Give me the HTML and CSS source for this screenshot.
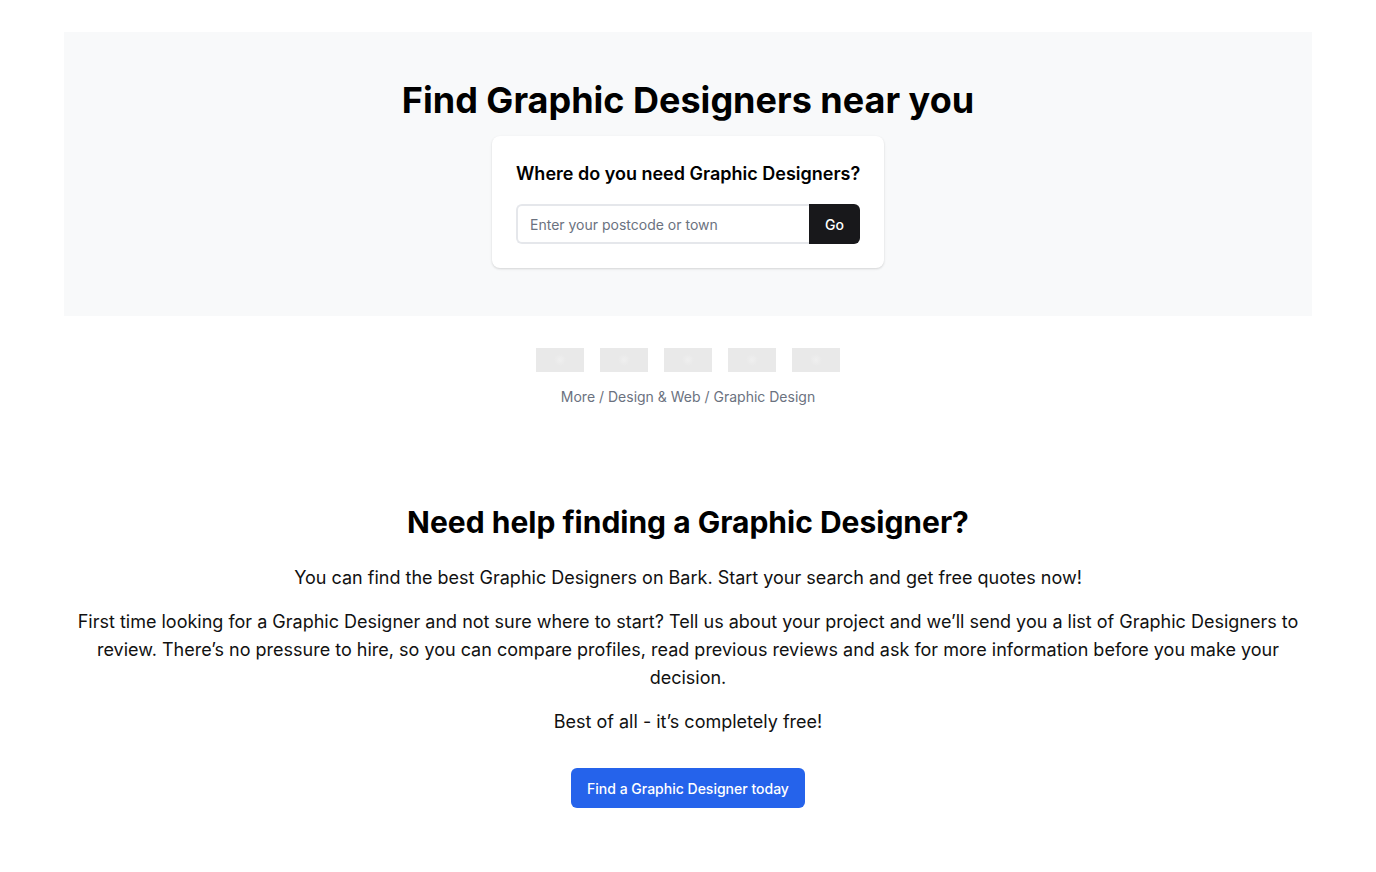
FILE: index.html
```html
<!DOCTYPE html>
<html lang="en">
<head>
<meta charset="utf-8">
<title>Find Graphic Designers near you</title>
<link rel="stylesheet" href="styles.css">
</head>
<body>
<main class="page">
  <section class="hero">
    <h1 class="hero-title">Find Graphic Designers near you</h1>
    <div class="card">
      <h2 class="card-title">Where do you need Graphic Designers?</h2>
      <form class="search">
        <input class="search-input" type="text" placeholder="Enter your postcode or town">
        <button class="search-btn" type="button">Go</button>
      </form>
    </div>
  </section>
  <div class="logos">
    <span class="logo"></span>
    <span class="logo"></span>
    <span class="logo"></span>
    <span class="logo"></span>
    <span class="logo"></span>
  </div>
  <nav class="crumbs">More / Design &amp; Web / Graphic Design</nav>
  <section class="help">
    <h2 class="help-title">Need help finding a Graphic Designer?</h2>
    <p class="help-text">You can find the best Graphic Designers on Bark. Start your search and get free quotes now!</p>
    <p class="help-text">First time looking for a Graphic Designer and not sure where to start? Tell us about your project and we’ll send you a list of Graphic Designers to review. There’s no pressure to hire, so you can compare profiles, read previous reviews and ask for more information before you make your decision.</p>
    <p class="help-text">Best of all - it’s completely free!</p>
    <button class="cta" type="button">Find a Graphic Designer today</button>
  </section>
</main>
</body>
</html>
```
FILE: styles.css
```css
* { box-sizing: border-box; }
html, body { margin: 0; padding: 0; background: #fff; }
body {
  font-family: Inter, "Noto Sans", sans-serif;
  color: #111;
}
.page {
  padding: 32px 64px 0;
  display: flex;
  flex-direction: column;
  align-items: stretch;
}
.hero {
  background: #f8f9fa;
  padding: 48px 0;
  display: flex;
  flex-direction: column;
  align-items: center;
}
.hero-title {
  margin: 0 0 16px;
  font-size: 36px;
  line-height: 40px;
  font-weight: 700;
  color: #000;
}
.card {
  width: 392px;
  background: #fff;
  border-radius: 8px;
  box-shadow: 0 1px 3px rgba(0,0,0,0.1), 0 1px 2px rgba(0,0,0,0.06);
  padding: 24px;
}
.card-title {
  margin: 0 0 16px;
  font-size: 18px;
  line-height: 28px;
  font-weight: 600;
  color: #000;
  text-align: center;
  white-space: nowrap;
}
.search {
  display: flex;
  margin: 0;
}
.search-input {
  flex: 1;
  height: 40px;
  border: 2px solid #e5e7eb;
  border-right: none;
  border-radius: 6px 0 0 6px;
  padding: 0 12px;
  font-family: Inter, sans-serif;
  font-size: 14px;
  color: #111;
  background: #fff;
  outline: none;
}
.search-input::placeholder { color: #6b7280; }
.search-btn {
  width: 51px;
  height: 40px;
  border: none;
  border-radius: 0 6px 6px 0;
  background: #18181b;
  color: #fff;
  font-family: Inter, sans-serif;
  font-size: 14px;
  font-weight: 500;
}
.logos {
  margin-top: 32px;
  display: flex;
  justify-content: center;
  gap: 16px;
}
.logo {
  width: 48px;
  height: 24px;
  background: radial-gradient(circle at center, #efefef 0, #e9e9e9 6px);
}
.crumbs {
  margin-top: 15px;
  text-align: center;
  font-size: 14px;
  line-height: 20px;
  color: #6b7280;
}
.help {
  padding-top: 97px;
  display: flex;
  flex-direction: column;
  align-items: center;
  text-align: center;
}
.help-title {
  margin: 0 0 24px;
  font-size: 30px;
  line-height: 36px;
  font-weight: 700;
  color: #000;
}
.help-text {
  margin: 0 0 16px;
  font-size: 18px;
  line-height: 28px;
  color: #111;
}
.cta {
  margin-top: 16px;
  height: 40px;
  padding: 0 16px;
  border: none;
  border-radius: 6px;
  background: #2563eb;
  color: #fff;
  font-family: Inter, sans-serif;
  font-size: 14px;
  font-weight: 500;
}
```
